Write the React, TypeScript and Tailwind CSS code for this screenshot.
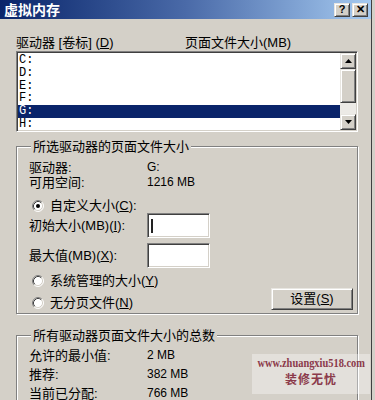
import React from 'react';

const raised =
  'border border-t-[#e8e6e1] border-l-[#e8e6e1] border-r-[#404040] border-b-[#404040] shadow-[inset_1px_1px_0_#fff,inset_-1px_-1px_0_#808080] bg-[#d4d0c8]';
const sunken =
  'border border-t-[#808080] border-l-[#808080] border-r-white border-b-white shadow-[inset_1px_1px_0_#404040,inset_-1px_-1px_0_#d4d0c8] p-[1px]';
const group =
  'border border-[#808080] shadow-[inset_1px_1px_0_#fff,1px_1px_0_#fff]';
const legend = 'ml-[2px] -mt-[8px] w-fit bg-[#d4d0c8] px-[2px] leading-[15px]';

function Radio({ checked }: { checked?: boolean }) {
  return (
    <svg width="12" height="12" viewBox="0 0 12 12" className="shrink-0">
      <circle cx="6" cy="6" r="5" fill="#fff" />
      <path d="M2.11 9.89 A5.5 5.5 0 0 1 9.89 2.11" stroke="#808080" fill="none" />
      <path d="M9.89 2.11 A5.5 5.5 0 0 1 2.11 9.89" stroke="#fff" fill="none" />
      <path d="M2.82 9.18 A4.5 4.5 0 0 1 9.18 2.82" stroke="#404040" fill="none" />
      <path d="M9.18 2.82 A4.5 4.5 0 0 1 2.82 9.18" stroke="#d4d0c8" fill="none" />
      {checked && <circle cx="6" cy="6" r="2" fill="#000" />}
    </svg>
  );
}

function Arrow({ up }: { up?: boolean }) {
  return (
    <svg width="7" height="4" viewBox="0 0 7 4">
      <path d={up ? 'M3.5 0 L7 4 L0 4 Z' : 'M0 0 L7 0 L3.5 4 Z'} fill="#000" />
    </svg>
  );
}

const drives = ['C:', 'D:', 'E:', 'F:', 'G:', 'H:'];

export default function App() {
  return (
    <div className="flex h-[400px] w-[375px] overflow-hidden bg-[#d4d0c8] font-['Liberation_Sans','Noto_Sans_CJK_SC',sans-serif] text-[13px] text-black">
      <div className="relative h-full w-[372px] border-r border-[#404040]">
        {/* Title bar */}
        <div className="flex h-[19px] items-center bg-gradient-to-r from-[#0a246a] via-[#4a6aa8] to-[#a6caf0] pl-[4px] pr-[3px]">
          <span className="text-[14px] font-bold leading-none text-white">虚拟内存</span>
          <div className="ml-auto flex gap-[2px]">
            <div className={`${raised} flex h-[14px] w-[16px] items-center justify-center text-[11px] font-bold leading-none`}>?</div>
            <div className={`${raised} flex h-[14px] w-[16px] items-center justify-center text-[11px] font-bold leading-none`}>✕</div>
          </div>
        </div>

        <div className="pl-[16px] pr-[13px]">
          {/* Column headers */}
          <div className="mt-[16px] flex leading-[15px]">
            <div className="w-[169px]">
              驱动器 [卷标] (<u>D</u>)
            </div>
            <div>页面文件大小(MB)</div>
          </div>

          {/* Drive list */}
          <div className={`${sunken} mt-[1px] h-[81px] w-[342px] bg-white`}>
            <div className="flex h-full">
              <div className="flex-1 pt-[1px]">
                {drives.map((d) => (
                  <div
                    key={d}
                    className={`h-[12.8px] pl-[1px] font-['Liberation_Mono',monospace] text-[12px] leading-[12.8px] ${
                      d === 'G:' ? 'bg-[#0a246a] text-white' : ''
                    }`}
                  >
                    {d}
                  </div>
                ))}
              </div>
              <div className="flex w-[16px] flex-col">
                <div className={`${raised} flex h-[16px] items-center justify-center`}>
                  <Arrow up />
                </div>
                <div className={`${raised} h-[34px]`} />
                <div className="flex-1 bg-[#eceae6]" />
                <div className={`${raised} flex h-[16px] items-center justify-center`}>
                  <Arrow />
                </div>
              </div>
            </div>
          </div>

          {/* Selected drive group */}
          <div className={`${group} mt-[14px] w-[342px] pb-[3px] pl-[12px] pr-[4px]`}>
            <div className={`${legend} -ml-[5px]`}>所选驱动器的页面文件大小</div>
            <div className="mt-[6px] flex leading-[15px]">
              <div className="w-[118px]">驱动器:</div>
              <div className="text-[12px]">G:</div>
            </div>
            <div className="flex leading-[15px]">
              <div className="w-[118px]">可用空间:</div>
              <div className="text-[12px]">1216 MB</div>
            </div>
            <div className="mt-[9px] flex h-[14px] items-center gap-[6px] pl-[3px] leading-[14px]">
              <Radio checked />
              <span>
                自定义大小(<u>C</u>):
              </span>
            </div>
            <div className="flex h-[25px] items-center">
              <div className="w-[118px]">
                初始大小(MB)(<u>I</u>):
              </div>
              <div className={`${sunken} flex h-[25px] w-[63px] items-center bg-white`}>
                <div className="ml-[2px] h-[14px] w-[2px] bg-[#222]" />
              </div>
            </div>
            <div className="mt-[5px] flex h-[25px] items-center">
              <div className="w-[118px]">
                最大值(MB)(<u>X</u>):
              </div>
              <div className={`${sunken} h-[25px] w-[63px] bg-white`} />
            </div>
            <div className="mt-[5px] flex items-end">
              <div className="flex flex-col gap-[7px] pl-[3px]">
                <div className="flex h-[15px] items-center gap-[6px]">
                  <Radio />
                  <span>
                    系统管理的大小(<u>Y</u>)
                  </span>
                </div>
                <div className="flex h-[15px] items-center gap-[6px]">
                  <Radio />
                  <span>
                    无分页文件(<u>N</u>)
                  </span>
                </div>
              </div>
              <div className={`${raised} ml-auto flex h-[22px] w-[82px] items-center justify-center`}>
                设置(<u>S</u>)
              </div>
            </div>
          </div>

          {/* Totals group */}
          <div className={`${group} mt-[21px] h-[80px] w-[342px] pl-[12px]`}>
            <div className={`${legend} -ml-[5px]`}>所有驱动器页面文件大小的总数</div>
            <div className="mt-[3px] flex leading-[19px]">
              <div className="w-[118px]">允许的最小值:</div>
              <div className="text-[12px]">2 MB</div>
            </div>
            <div className="flex leading-[19px]">
              <div className="w-[118px]">推荐:</div>
              <div className="text-[12px]">382 MB</div>
            </div>
            <div className="flex leading-[19px]">
              <div className="w-[118px]">当前已分配:</div>
              <div className="text-[12px]">766 MB</div>
            </div>
          </div>
        </div>

        {/* Watermark */}
        <div className="absolute left-[252px] top-[354px] flex h-[40px] w-[118px] flex-col items-center bg-white/35">
          <div className="mt-[2px] origin-center scale-x-[0.8] whitespace-nowrap font-['Liberation_Serif',serif] text-[13px] font-bold leading-[14px] text-[#8b3a4a]">
            www.zhuangxiu518.com
          </div>
          <div className="mt-[3px] text-[12px] font-bold leading-[14px] tracking-[1px] text-[#8b3a4a]">装修无忧</div>
        </div>
      </div>
    </div>
  );
}
